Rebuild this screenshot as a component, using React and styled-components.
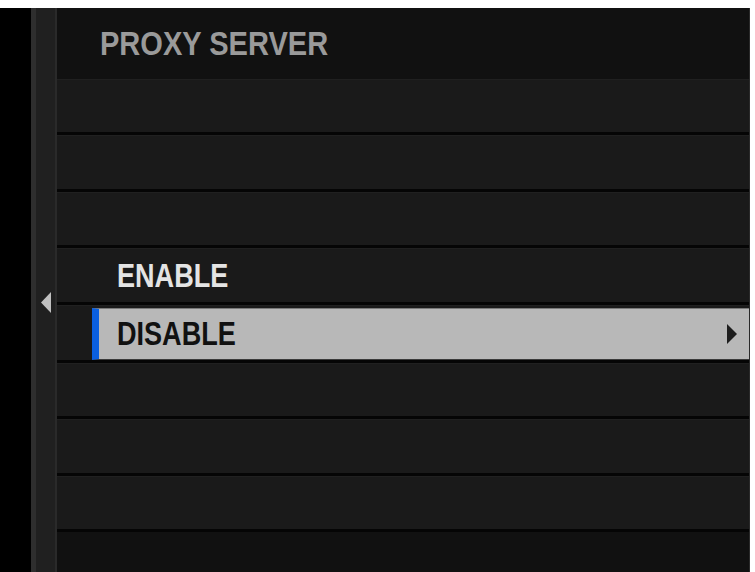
import styled, { createGlobalStyle } from "styled-components";

const GlobalStyle = createGlobalStyle`
  html, body {
    margin: 0;
    padding: 0;
    background: #ffffff;
  }
  body {
    font-family: "Liberation Sans", Arial, sans-serif;
  }
`;

const Screen = styled.div`
  display: flex;
  width: 750px;
  height: 564px;
  margin-top: 8px;
  background: #000;
  overflow: hidden;
`;

const Gutter = styled.div`
  width: 31px;
  background: #000;
`;

const Sidebar = styled.div`
  width: 19px;
  display: flex;
  align-items: center;
  justify-content: center;
  padding-top: 25px;
  box-sizing: content-box;
  background: #202020;
  border-left: 5px solid #2e2e2e;
  border-right: 2px solid #2a2a2a;
`;

const Main = styled.div`
  flex: 1;
  display: flex;
  flex-direction: column;
  border-right: 1px solid #2a2a2a;
`;

const Header = styled.div`
  height: 71px;
  display: flex;
  align-items: center;
  padding-left: 43px;
  background: #111111;
`;

const Label = styled.span`
  display: inline-block;
  font-size: 33px;
  font-weight: 700;
  line-height: 1;
  color: ${(p) => p.color};
  transform: scaleX(${(p) => p.squeeze});
  transform-origin: left center;
  white-space: nowrap;
`;

const List = styled.div`
  height: 453px;
  display: flex;
  flex-direction: column;
`;

const Row = styled.div`
  flex: 1;
  display: flex;
  align-items: stretch;
  background: #1a1a1a;
  border-top: 1px solid #202020;
  border-bottom: 3px solid #050505;
  padding: ${(p) => (p.selected ? "2px 0 0 35px" : "0 0 0 60px")};
`;

const RowText = styled.div`
  display: flex;
  align-items: center;
  padding-top: 1px;
`;

const Highlight = styled.div`
  flex: 1;
  display: flex;
  align-items: center;
  justify-content: space-between;
  padding: 0 12px 0 18px;
  background: #b8b8b8;
  border-left: 7px solid #0a5fe0;
  border-top: 1px solid #7a7a7a;
  border-bottom: 1px solid #3a3a3a;
`;

const Footer = styled.div`
  flex: 1;
  background: #111111;
`;

const Arrow = ({ dir, color, w, h }) => (
  <svg width={w} height={h} viewBox={`0 0 ${w} ${h}`}>
    {dir === "left" ? (
      <polygon points={`${w},0 ${w},${h} 0,${h / 2}`} fill={color} />
    ) : (
      <polygon points={`0,0 0,${h} ${w},${h / 2}`} fill={color} />
    )}
  </svg>
);

const items = ["", "", "", "ENABLE", "DISABLE", "", "", ""];

export default function App() {
  return (
    <>
      <GlobalStyle />
      <Screen>
        <Gutter />
        <Sidebar>
          <Arrow dir="left" color="#c0c0c0" w={10} h={21} />
        </Sidebar>
        <Main>
          <Header>
            <Label color="#9a9a9a" squeeze={0.88}>
              PROXY SERVER
            </Label>
          </Header>
          <List>
            {items.map((text, i) =>
              text === "DISABLE" ? (
                <Row key={i} selected>
                  <Highlight>
                    <Label color="#111111" squeeze={0.82}>
                      {text}
                    </Label>
                    <Arrow dir="right" color="#1e1e1e" w={10} h={20} />
                  </Highlight>
                </Row>
              ) : (
                <Row key={i}>
                  <RowText>
                    <Label color="#e4e4e4" squeeze={0.82}>
                      {text}
                    </Label>
                  </RowText>
                </Row>
              )
            )}
          </List>
          <Footer />
        </Main>
      </Screen>
    </>
  );
}
